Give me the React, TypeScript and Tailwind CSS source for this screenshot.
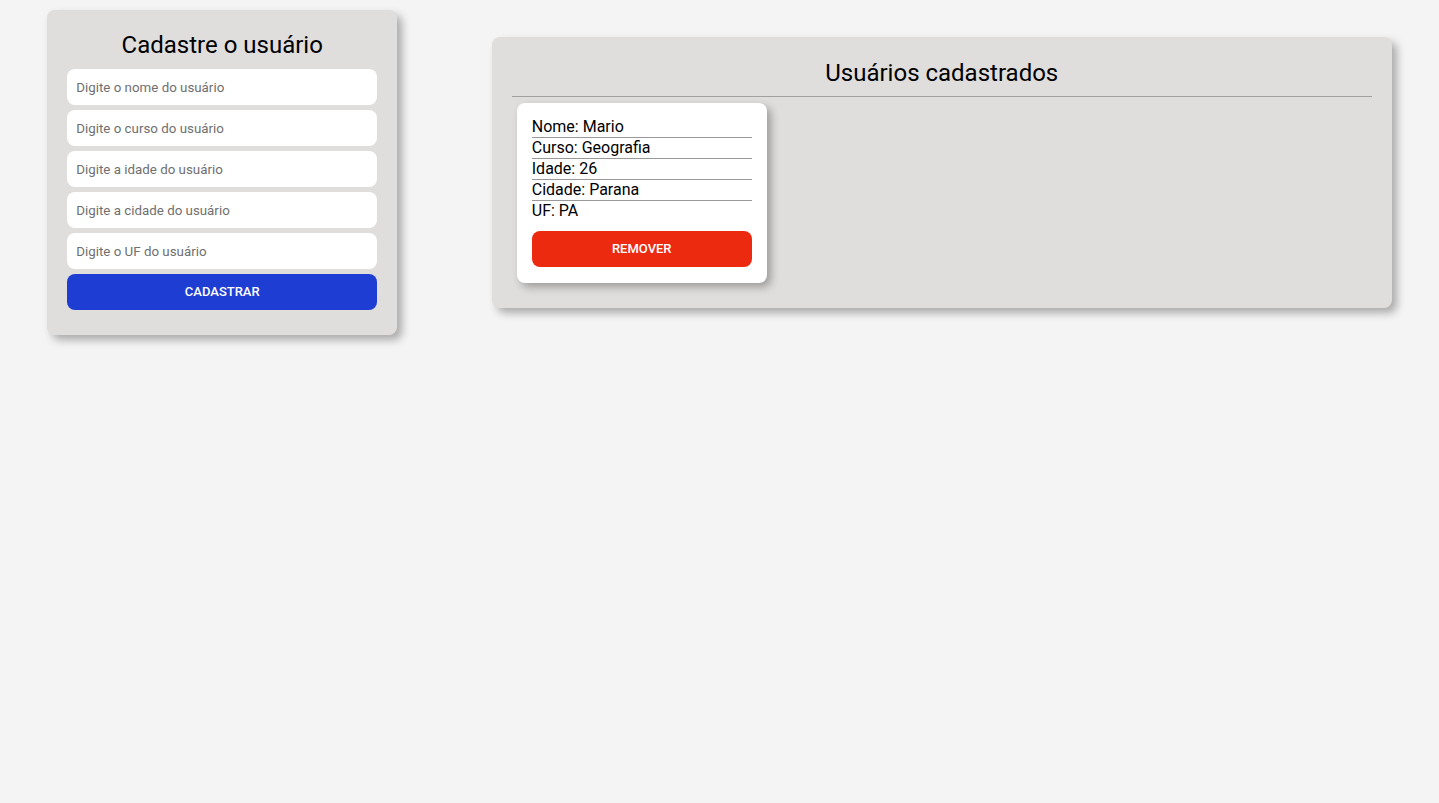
const fields = [
  "Digite o nome do usuário",
  "Digite o curso do usuário",
  "Digite a idade do usuário",
  "Digite a cidade do usuário",
  "Digite o UF do usuário",
];

const user = [
  ["Nome", "Mario"],
  ["Curso", "Geografia"],
  ["Idade", "26"],
  ["Cidade", "Parana"],
];

function Cadastro() {
  return (
    <form
      className="mt-[10px] flex w-[350px] flex-col rounded-lg bg-[#dfdedd] px-5 pt-[21px] pb-[25px] shadow-[5px_5px_8px_rgba(0,0,0,0.3)]"
      onSubmit={(e) => e.preventDefault()}
    >
      <h1 className="mb-[10px] text-center text-[24px] leading-[28px] text-black">Cadastre o usuário</h1>
      <div className="flex flex-col gap-[5px]">
        {fields.map((f) => (
          <input
            key={f}
            placeholder={f}
            className="h-9 rounded-lg bg-white px-[9px] text-[13.33px] text-black outline-none placeholder:text-[#6f6f6f]"
          />
        ))}
        <button className="h-9 rounded-lg bg-[#1e3dd3] text-[13px] font-medium uppercase text-white">
          Cadastrar
        </button>
      </div>
    </form>
  );
}

function UserCard() {
  return (
    <div className="w-[250px] rounded-lg bg-white px-[15px] pt-[14px] pb-4 shadow-[4px_4px_8px_rgba(0,0,0,0.3)]">
      {user.map(([k, v]) => (
        <p key={k} className="border-b border-[#999] text-[16px] leading-[20px] text-black">
          {k}: {v}
        </p>
      ))}
      <p className="text-[16px] leading-[20px] text-black">UF: PA</p>
      <button className="mt-[10px] h-9 w-full rounded-lg bg-[#ec2a10] text-[13px] font-medium uppercase text-white">
        Remover
      </button>
    </div>
  );
}

export default function App() {
  return (
    <div className="min-h-[803px] bg-[#f4f4f4] font-['Roboto',sans-serif]">
      <div className="flex items-start justify-around">
        <Cadastro />
        <section className="mt-[37px] w-[900px] rounded-lg bg-[#dfdedd] px-5 pt-[22px] pb-[25px] shadow-[5px_5px_8px_rgba(0,0,0,0.3)]">
          <h2 className="pb-[9px] text-center text-[24px] leading-[28px] text-black">Usuários cadastrados</h2>
          <div className="border-t border-[#a0a0a0] px-[5px] pt-[6px]">
            <UserCard />
          </div>
        </section>
      </div>
    </div>
  );
}
